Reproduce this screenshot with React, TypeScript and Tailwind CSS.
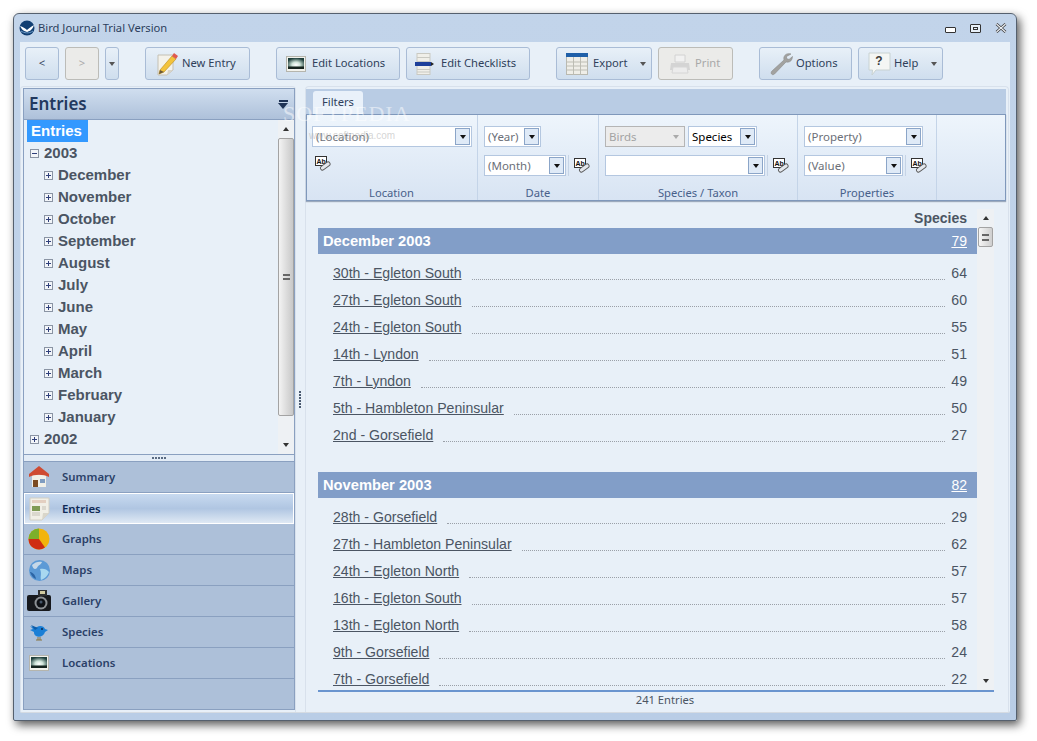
import type { ReactNode } from 'react'

const uiFont = "font-['Noto_Sans','Open_Sans',sans-serif]"
const dataFont = "font-['Liberation_Sans',Arial,sans-serif]"

const months = ['December', 'November', 'October', 'September', 'August', 'July', 'June', 'May', 'April', 'March', 'February', 'January']

const navItems = ['Summary', 'Entries', 'Graphs', 'Maps', 'Gallery', 'Species', 'Locations']

const december = [
  ['30th - Egleton South', '64'],
  ['27th - Egleton South', '60'],
  ['24th - Egleton South', '55'],
  ['14th - Lyndon', '51'],
  ['7th - Lyndon', '49'],
  ['5th - Hambleton Peninsular', '50'],
  ['2nd - Gorsefield', '27'],
]

const november = [
  ['28th - Gorsefield', '29'],
  ['27th - Hambleton Peninsular', '62'],
  ['24th - Egleton North', '57'],
  ['16th - Egleton South', '57'],
  ['13th - Egleton North', '58'],
  ['9th - Gorsefield', '24'],
  ['7th - Gorsefield', '22'],
]

function BirdLogo() {
  return (
    <svg width="16" height="16" viewBox="0 0 16 16">
      <circle cx="8" cy="8" r="7.5" fill="#123f73" />
      <path d="M1 6 C4 7 6 8 8 10 C10 8 12 7 15 5 C13 11 10 11 8 12 C5 11 3 10 1 6Z" fill="#fff" />
      <path d="M2 11 C5 13 10 14 14 11" stroke="#6f9cc9" strokeWidth="1" fill="none" />
    </svg>
  )
}

function PencilIcon() {
  return (
    <svg width="24" height="26" viewBox="0 0 24 26">
      <path d="M2 4 H17 V19 L11 24 H2Z" fill="#f4f2ea" stroke="#c4c0b4" />
      <path d="M11 24 L12 19 H17Z" fill="#d8d4c8" />
      <path d="M4 19 L16 5 L20 8 L8 21 L3 23Z" fill="#f3c33c" stroke="#b98a1c" strokeWidth="0.6" />
      <path d="M16 5 L18 2 L22 5 L20 8Z" fill="#e05a4e" />
      <path d="M3 23 L4 19 L8 21Z" fill="#6b5a3a" />
    </svg>
  )
}

function LandscapeIcon({ size = 20 }: { size?: number }) {
  return (
    <svg width={size} height={size * 0.8} viewBox="0 0 20 16">
      <defs>
        <radialGradient id="land" cx="0.5" cy="0.62" r="0.62">
          <stop offset="0" stopColor="#ffffff" />
          <stop offset="0.4" stopColor="#cfe4d8" />
          <stop offset="1" stopColor="#1e3f3c" />
        </radialGradient>
      </defs>
      <rect x="0.5" y="0.5" width="19" height="15" fill="#f2f2ec" stroke="#b5b5ad" />
      <rect x="2" y="2" width="16" height="11" fill="url(#land)" />
      <rect x="2" y="10.500" width="16" height="2.500" fill="#16241e" />
    </svg>
  )
}

function ChecklistIcon() {
  return (
    <svg width="20" height="22" viewBox="0 0 20 22">
      <rect x="2" y="0.5" width="13" height="21" fill="#f0efe9" stroke="#c9c9c2" />
      <path d="M2 4.5H15M2 8.5H15M2 16.5H15M2 19H15" stroke="#c9c9c2" />
      <rect x="0" y="9" width="16" height="4" fill="#1d3f9a" />
      <path d="M16 9 L19 11 L16 13Z" fill="#222" />
    </svg>
  )
}

function TableIcon() {
  return (
    <svg width="22" height="22" viewBox="0 0 22 22">
      <rect x="0.5" y="0.5" width="21" height="21" fill="#efeee8" stroke="#b9b9b0" />
      <rect x="0" y="0" width="22" height="4" fill="#1f5fa8" />
      <path d="M0.5 9H21.5M0.5 13H21.5M0.5 17H21.5M7.5 4V21.5M14.5 4V21.5" stroke="#bdbdb4" />
    </svg>
  )
}

function PrinterIcon() {
  return (
    <svg width="22" height="20" viewBox="0 0 22 20">
      <path d="M6 1 H16 V8 H6Z" fill="#f1f1f1" stroke="#d2d2d2" />
      <path d="M2 9 H20 L21 16 H1Z" fill="#d4d4d4" />
      <path d="M4 13 H18 L19 19 H3Z" fill="#ececec" stroke="#d6d6d6" />
    </svg>
  )
}

function WrenchIcon() {
  return (
    <svg width="24" height="24" viewBox="0 0 24 24">
      <path d="M22 2 C19 1 16 2 15 5 C14.600 6.500 15 7.500 15 8 L3 19 C1 21 3 24 5.500 22 L17 10 C19 10.500 22 10 23 7 L23.500 4.500 L20 7.500 L17.500 6.500 L17.500 4.500Z" fill="#a2a2a0" stroke="#8a8a88" strokeWidth="0.6" />
    </svg>
  )
}

function HelpIcon() {
  return (
    <svg width="23" height="24" viewBox="0 0 23 24">
      <path d="M1 1 H22 V18 H8 L4 23 L4.500 18 H1Z" fill="#f4f6f4" stroke="#c8d2d2" />
      <text x="11" y="13" textAnchor="middle" fontSize="12" fontWeight="700" fontFamily="Liberation Sans" fill="#3b3b3b">?</text>
    </svg>
  )
}

function HouseIcon() {
  return (
    <svg width="20" height="22" viewBox="0 0 20 22">
      <rect x="3" y="9" width="14" height="12" fill="#f1f0e8" />
      <path d="M0 8 L10 0 L20 8 V11 C14 8 6 8 0 11Z" fill="#cf4b32" />
      <rect x="4" y="14" width="5" height="7" fill="#7a4a22" />
      <rect x="11" y="13" width="5" height="4" fill="#7f9cc0" />
    </svg>
  )
}

function NoteIcon() {
  return (
    <svg width="21" height="24" viewBox="0 0 21 24">
      <path d="M1 1 H20 V16 L13 23 H1Z" fill="#f1efe6" stroke="#d2cfc4" />
      <path d="M13 23 L14 16 H20Z" fill="#d9d6ca" />
      <rect x="3" y="3" width="14" height="3" fill="#e3cfc0" />
      <rect x="3" y="9" width="8" height="5" fill="#7f9b55" />
      <path d="M3 16H11M3 18H11M13 10H17M13 12H17" stroke="#c5c1b5" />
    </svg>
  )
}

function PieIcon() {
  return (
    <svg width="22" height="22" viewBox="0 0 22 22">
      <circle cx="11" cy="11" r="10.500" fill="#f2b40c" />
      <path d="M11 11 L11 0.500 A10.500 10.500 0 0 0 0.500 11Z" fill="#7caf2b" />
      <path d="M11 11 L0.500 11 A10.500 10.500 0 0 0 17 19.600Z" fill="#cf2d12" />
    </svg>
  )
}

function GlobeIcon() {
  return (
    <svg width="21" height="21" viewBox="0 0 21 21">
      <circle cx="10.500" cy="10.500" r="10.500" fill="#5c9ad6" />
      <path d="M3 5 C6 2 10 1 13 2 C12 5 9 5 8 8 C6 10 4 9 3 5Z" fill="#c6d8e8" />
      <path d="M11 9 C14 8 18 9 20 12 C18 17 15 19 12 20 C11 16 13 14 11 9Z" fill="#a8d8f0" />
      <path d="M1 12 C3 12 6 14 7 19 C4 18 2 15 1 12Z" fill="#2c65a5" />
    </svg>
  )
}

function CameraIcon() {
  return (
    <svg width="24" height="22" viewBox="0 0 24 22">
      <rect x="0" y="5" width="24" height="16" rx="2" fill="#17191d" />
      <rect x="11" y="0" width="9" height="6" fill="#2d2f30" />
      <rect x="13" y="1" width="5" height="3" fill="#d0caa0" />
      <circle cx="14" cy="13" r="6.500" fill="#8c9094" />
      <circle cx="14" cy="13" r="4.500" fill="#0e1116" />
      <circle cx="14" cy="12" r="1.500" fill="#46566a" />
    </svg>
  )
}

function BirdIcon() {
  return (
    <svg width="18" height="17" viewBox="0 0 18 17">
      <path d="M7 3 C10 1 14 2 15 5 L18 6 L15 8 C14 12 9 14 6 12 C4 11 4 9 4 8 L0 6 L3 5 L0 2 L5 4Z" fill="#1b7fd6" />
      <path d="M5 6 L1 1 L8 4Z" fill="#0d5ca8" />
      <circle cx="12" cy="5" r="1" fill="#0b2b50" />
      <path d="M8 13 V16 M10 13 V16 M6 16 H12" stroke="#8a7440" />
    </svg>
  )
}

function EraserIcon() {
  return (
    <svg width="16" height="15" viewBox="0 0 16 15">
      <rect x="0.5" y="0.500" width="11" height="9" fill="#fff" stroke="#333" />
      <text x="1.500" y="7.500" fontSize="7" fontWeight="700" fontFamily="Liberation Sans" fill="#111">Ab</text>
      <line x1="7.500" y1="12" x2="13" y2="8" stroke="#555" strokeWidth="5" strokeLinecap="round" />
      <line x1="7.500" y1="12" x2="13" y2="8" stroke="#e4e8ee" strokeWidth="3.400" strokeLinecap="round" />
    </svg>
  )
}

function Caret({ className = 'border-t-[#444]' }: { className?: string }) {
  return <span className={`w-0 h-0 border-x-[3.5px] border-x-transparent border-t-[4px] ${className}`} />
}

function CaretUp() {
  return <span className="w-0 h-0 border-x-[3.5px] border-x-transparent border-b-[4px] border-b-[#333]" />
}

function ToolButton({ width, icon, label, gap = 'gap-[6px]', disabled, menu, className = '' }: {
  width: string
  icon?: ReactNode
  label: string
  gap?: string
  disabled?: boolean
  menu?: boolean
  className?: string
}) {
  return (
    <div
      className={`${width} ${className} h-[33px] shrink-0 rounded-[3px] border flex items-center ${gap} px-[7px] text-[11.2px] ${
        disabled
          ? 'border-[#bcbcb8] bg-[#ebebe9] text-[#a8a8a8]'
          : 'border-[#a9bcd6] bg-gradient-to-b from-[#e8f0f8] to-[#cfdeee] text-[#2f3f5a]'
      }`}
    >
      {icon}
      <span className={menu ? 'flex-1' : ''}>{label}</span>
      {menu && <Caret className="border-t-[#555]" />}
    </div>
  )
}

function Combo({ width, label, disabled, dark }: { width: string; label?: string; disabled?: boolean; dark?: boolean }) {
  return (
    <div className={`${width} h-[21px] shrink-0 border flex items-center justify-between pl-[3px] text-[11.5px] ${
      disabled ? 'border-[#b5b5b5] bg-[#ececec] text-[#a3a3a3]' : `border-[#b4c7e0] bg-white ${dark ? 'text-black' : 'text-[#6b6f78]'}`
    }`}>
      <span>{label}</span>
      {disabled ? (
        <span className="w-[15px] h-[17px] mr-[1px] flex items-center justify-center"><Caret className="border-t-[#aaa]" /></span>
      ) : (
        <span className="w-[15px] h-[17px] mr-[1px] border border-[#8ba5c8] bg-[#dfeaf7] flex items-center justify-center"><Caret className="border-t-[#111]" /></span>
      )}
    </div>
  )
}

function RibbonGroup({ width, label, inset = 'pl-[6px]', children }: { width: string; label: string; inset?: string; children?: ReactNode }) {
  return (
    <div className={`${width} ${inset} shrink-0 border-r border-[#c4d4e8] flex flex-col pt-[11px] pr-[6px]`}>
      <div className="h-[58px] flex flex-col gap-[8px]">{children}</div>
      <div className="text-center text-[11.2px] text-[#47608a] leading-[14px] mt-[3px]">{label}</div>
    </div>
  )
}

function Grip() {
  return <span className="w-[1px] h-[21px] bg-[#c6d4e6] mx-[2px] shrink-0" />
}

function TreeBox({ open }: { open?: boolean }) {
  return (
    <span className="relative w-[9px] h-[9px] border border-[#8a94a4] bg-[#f2f5f9] shrink-0 flex items-center justify-center">
      <span className="w-[5px] h-[1px] bg-[#2f3f7a]" />
      {!open && <span className="absolute w-[1px] h-[5px] bg-[#2f3f7a]" />}
    </span>
  )
}

function TreeRow({ label, open, nested }: { label: string; open?: boolean; nested?: boolean }) {
  return (
    <div className={`h-[22px] flex items-center gap-[5px] ${nested ? 'pl-[17px]' : 'pl-[3px]'}`}>
      <TreeBox open={open} />
      <span className="mb-[2px] text-[15px] font-bold text-[#4b5563] leading-none">{label}</span>
    </div>
  )
}

function ScrollArrow({ up }: { up?: boolean }) {
  return <div className="h-[18px] flex items-center justify-center">{up ? <CaretUp /> : <Caret className="border-t-[#333]" />}</div>
}

function TreePanel() {
  return (
    <div className={`${dataFont} h-[334px] flex bg-[#e8f0f8] overflow-hidden`}>
      <div className="flex-1 pl-[3px]">
        <div className="w-[61px] h-[22px] bg-[#3399ff] text-white text-[15px] font-bold flex items-center pl-[4px] pb-[1px] leading-none">Entries</div>
        <TreeRow label="2003" open />
        {months.map((m) => <TreeRow key={m} label={m} nested />)}
        <TreeRow label="2002" />
      </div>
      <div className="w-[16px] bg-[#eef1f4] flex flex-col">
        <ScrollArrow up />
        <div className="h-[278px] rounded-[2px] border border-[#a3a3a3] bg-gradient-to-r from-[#f3f3f3] to-[#c8c8c8] flex items-center justify-center">
          <span className="w-[7px] h-[6px] border-y-2 border-[#666] border-double" />
        </div>
        <div className="flex-1" />
        <ScrollArrow />
      </div>
    </div>
  )
}

function NavIcon({ name }: { name: string }) {
  switch (name) {
    case 'Summary': return <HouseIcon />
    case 'Entries': return <NoteIcon />
    case 'Graphs': return <PieIcon />
    case 'Maps': return <GlobeIcon />
    case 'Gallery': return <CameraIcon />
    case 'Species': return <BirdIcon />
    default: return <LandscapeIcon />
  }
}

function NavList() {
  return (
    <div className="flex-1 bg-[#adc0d9]">
      {navItems.map((name) => {
        const active = name === 'Entries'
        return (
          <div
            key={name}
            className={`h-[31px] flex items-center border-b ${
              active
                ? 'border border-white bg-gradient-to-b from-[#c8daf0] via-[#b0c6e2] to-[#dfe9f4]'
                : 'border-[#8aa0c0]'
            }`}
          >
            <span className={`${active ? 'w-[29px] mr-[8px]' : 'w-[30px] mr-[8px]'} shrink-0 flex justify-center`}><NavIcon name={name} /></span>
            <span className={`text-[11.4px] font-semibold ${active ? 'text-[#0f2a55]' : 'text-[#2b4168]'}`}>{name}</span>
          </div>
        )
      })}
    </div>
  )
}

function EntryRow({ label, count }: { label: string; count: string }) {
  return (
    <div className="h-[27px] flex items-center pl-[15px] pr-[10px] text-[14.1px] text-[#4b5563]">
      <span className="underline whitespace-nowrap">{label}</span>
      <span className="flex-1 ml-[10px] mr-[6px] mt-[12px] border-b border-dotted border-[#9aa0a8]" />
      <span className="w-[16px] text-right">{count}</span>
    </div>
  )
}

function MonthBlock({ title, total, rows, className = '' }: { title: string; total: string; rows: string[][]; className?: string }) {
  return (
    <div className={className}>
      <div className="h-[26px] bg-[#829ec8] flex items-center justify-between pl-[5px] pr-[10px] text-white">
        <span className="text-[14.7px] font-bold">{title}</span>
        <span className="text-[14px] underline">{total}</span>
      </div>
      <div className="pt-[6px]">
        {rows.map(([label, count]) => <EntryRow key={label} label={label} count={count} />)}
      </div>
    </div>
  )
}

function ContentScrollbar() {
  return (
    <div className="w-[17px] bg-[#eef1f4] flex flex-col">
      <ScrollArrow up />
      <div className="h-[20px] mx-[1px] rounded-[2px] border border-[#a3a3a3] bg-gradient-to-r from-[#f5f5f5] to-[#cfcfcf] flex items-center justify-center">
        <span className="w-[7px] h-[7px] border-y-2 border-[#666] border-double" />
      </div>
      <div className="flex-1" />
      <ScrollArrow />
    </div>
  )
}

export default function App() {
  return (
    <div className={`${uiFont} relative w-[1037px] h-[741px] bg-white pt-[13px] pl-[13px] overflow-hidden`}>
      <div className="w-[1004px] h-[708px] rounded-t-[6px] rounded-b-[2px] border border-[#55606e] bg-gradient-to-b from-[#c2d4ea] to-[#b9cde6] shadow-[3px_4px_10px_rgba(0,0,0,0.65)] flex flex-col">
        {/* Title bar */}
        <div className="h-[28px] shrink-0 flex items-center pl-[5px] pr-[9px]">
          <BirdLogo />
          <span className="ml-[3px] text-[11.2px] text-[#2c3e5c]">Bird Journal Trial Version</span>
          <div className="ml-auto flex items-center gap-[14px]">
            <span className="w-[11px] h-[6px] mt-[3px] rounded-[1px] border border-[#333] bg-white" />
            <span className="w-[11px] h-[9px] rounded-[1px] border border-[#333] bg-[#e8f0f8] flex items-center justify-center"><span className="w-[5px] h-[3px] border border-[#333]" /></span>
            <svg width="12" height="10" viewBox="0 0 12 10">
              <path d="M1.500 1 L10.500 9 M10.500 1 L1.500 9" stroke="#333" strokeWidth="2.600" />
              <path d="M1.500 1 L10.500 9 M10.500 1 L1.500 9" stroke="#eef2f7" strokeWidth="1.200" />
            </svg>
          </div>
        </div>

        {/* Client area */}
        <div className="flex-1 mx-[6px] mb-[7px] bg-[#e8f0f8] flex flex-col min-h-0 rounded-b-[2px] border-b border-[#d5dbe2]">
          {/* Toolbar */}
          <div className="h-[44px] shrink-0 flex items-start pt-[5px] pl-[5px]">
            <ToolButton width="w-[34px]" label="<" className="justify-center" />
            <ToolButton width="w-[34px] ml-[6px]" label=">" disabled className="justify-center" />
            <div className="w-[14px] h-[33px] ml-[6px] rounded-[3px] border border-[#a9bcd6] bg-gradient-to-b from-[#e8f0f8] to-[#cfdeee] flex items-center justify-center"><Caret className="border-t-[#555]" /></div>
            <ToolButton width="w-[105px] ml-[26px]" icon={<PencilIcon />} label="New Entry" gap="gap-[2px]" className="pl-[10px]" />
            <ToolButton width="w-[124px] ml-[26px]" icon={<LandscapeIcon />} label="Edit Locations" className="pl-[9px]" />
            <ToolButton width="w-[124px] ml-[6px]" icon={<ChecklistIcon />} label="Edit Checklists" className="pl-[8px]" />
            <ToolButton width="w-[96px] ml-[26px]" icon={<TableIcon />} label="Export" gap="gap-[5px]" menu className="pl-[9px] pr-[5px]" />
            <ToolButton width="w-[75px] ml-[6px]" icon={<PrinterIcon />} label="Print" gap="gap-[4px]" disabled className="pl-[10px]" />
            <ToolButton width="w-[93px] ml-[26px]" icon={<WrenchIcon />} label="Options" gap="gap-[3px]" className="pl-[9px]" />
            <ToolButton width="w-[85px] ml-[6px]" icon={<HelpIcon />} label="Help" gap="gap-[3px]" menu className="pl-[9px] pr-[5px]" />
          </div>

          {/* Main */}
          <div className="flex-1 min-h-0 flex">
            {/* Left pane */}
            <div className="w-[276px] shrink-0 pl-[2px] pb-[2px] pt-[1px] rounded-t-[4px] border-t border-x border-[#d8e1ec]">
              <div className="h-full border border-[#8aa0c0] flex flex-col">
                <div className="h-[31px] shrink-0 border-b border-[#8aa0c0] bg-gradient-to-b from-[#d0deef] to-[#aec1da] flex items-center justify-between pl-[5px] pr-[6px]">
                  <span className="text-[17px] font-semibold text-[#23395f]">Entries</span>
                  <span className="flex flex-col items-center gap-[1px]">
                    <span className="w-[9px] h-[2px] bg-[#1f3355]" />
                    <span className="w-0 h-0 border-x-[5px] border-x-transparent border-t-[6px] border-t-[#1f3355]" />
                  </span>
                </div>
                <TreePanel />
                <div className="h-[8px] shrink-0 border-y border-[#8aa0c0] bg-[#e3ecf6] flex items-center justify-center gap-[1px]">
                  {[0, 1, 2, 3, 4].map((i) => <span key={i} className="w-[2px] h-[2px] bg-[#5a6b82]" />)}
                </div>
                <NavList />
              </div>
            </div>

            {/* Splitter */}
            <div className="w-[9px] shrink-0 flex flex-col items-center justify-center gap-[1px] pr-[1px]">
              {[0, 1, 2, 3, 4, 5].map((i) => <span key={i} className="w-[2px] h-[2px] bg-[#4a5a70]" />)}
            </div>

            {/* Right pane */}
            <div className="w-[704px] shrink-0 pt-[2px] pr-[2px] rounded-t-[4px] border-t border-x border-[#d8e1ec] flex flex-col">
              <div className="h-[25px] shrink-0 bg-[#b9cce4] flex items-end pl-[7px]">
                <div className="w-[50px] h-[23px] rounded-t-[3px] bg-[#e9f1fa] text-[11.2px] text-[#2f3f5a] flex items-center justify-center">Filters</div>
              </div>
              <div className="h-[87px] shrink-0 border border-[#7f98bb] bg-gradient-to-b from-[#eef5fc] to-[#d8e4f3] flex shadow-[0_1px_1px_rgba(80,100,130,0.5)]">
                <RibbonGroup width="w-[171px]" label="Location" inset="pl-[5px]">
                  <Combo width="w-[160px]" label="(Location)" />
                  <div className="pl-[3px] mt-[1px]"><EraserIcon /></div>
                </RibbonGroup>
                <RibbonGroup width="w-[121px]" label="Date">
                  <Combo width="w-[57px]" label="(Year)" />
                  <div className="flex items-center">
                    <Combo width="w-[82px]" label="(Month)" />
                    <Grip />
                    <span className="ml-[3px]"><EraserIcon /></span>
                  </div>
                </RibbonGroup>
                <RibbonGroup width="w-[199px]" label="Species / Taxon">
                  <div className="flex gap-[3px]">
                    <Combo width="w-[80px]" label="Birds" disabled />
                    <Combo width="w-[69px]" label="Species" dark />
                  </div>
                  <div className="flex items-center">
                    <Combo width="w-[160px]" />
                    <Grip />
                    <span className="ml-[3px]"><EraserIcon /></span>
                  </div>
                </RibbonGroup>
                <RibbonGroup width="w-[139px]" label="Properties">
                  <Combo width="w-[119px]" label="(Property)" />
                  <div className="flex items-center">
                    <Combo width="w-[99px]" label="(Value)" />
                    <Grip />
                    <span className="ml-[3px]"><EraserIcon /></span>
                  </div>
                </RibbonGroup>
              </div>

              <div className={`${dataFont} flex-1 min-h-0 flex flex-col pl-[12px] pr-[12px]`}>
                <div className="flex-1 min-h-0 flex mt-[8px] overflow-hidden">
                  <div className="flex-1 min-w-0">
                    <div className="h-[19px] flex items-center justify-end pr-[10px] text-[14px] font-bold text-[#4b5563]">Species</div>
                    <MonthBlock title="December 2003" total="79" rows={december} />
                    <MonthBlock title="November 2003" total="82" rows={november} className="mt-[23px]" />
                  </div>
                  <ContentScrollbar />
                </div>
                <div className={`${uiFont} h-[22px] shrink-0 border-t-2 border-[#6a95cf] flex items-start justify-center pl-[18px] text-[11.2px] text-[#4b5563]`}>241 Entries</div>
              </div>
            </div>
          </div>
        </div>
      </div>

      {/* Softpedia watermark over the filter strip */}
      <div className="absolute left-[283px] top-[97px] text-[22px] tracking-[1px] text-white/50 font-['Liberation_Serif',serif] pointer-events-none">SOFTPEDIA</div>
      <div className="absolute left-[309px] top-[128px] text-[10px] text-[#b8b8b8]/60 font-['Liberation_Sans',sans-serif] pointer-events-none">www.softpedia.com</div>
    </div>
  )
}
